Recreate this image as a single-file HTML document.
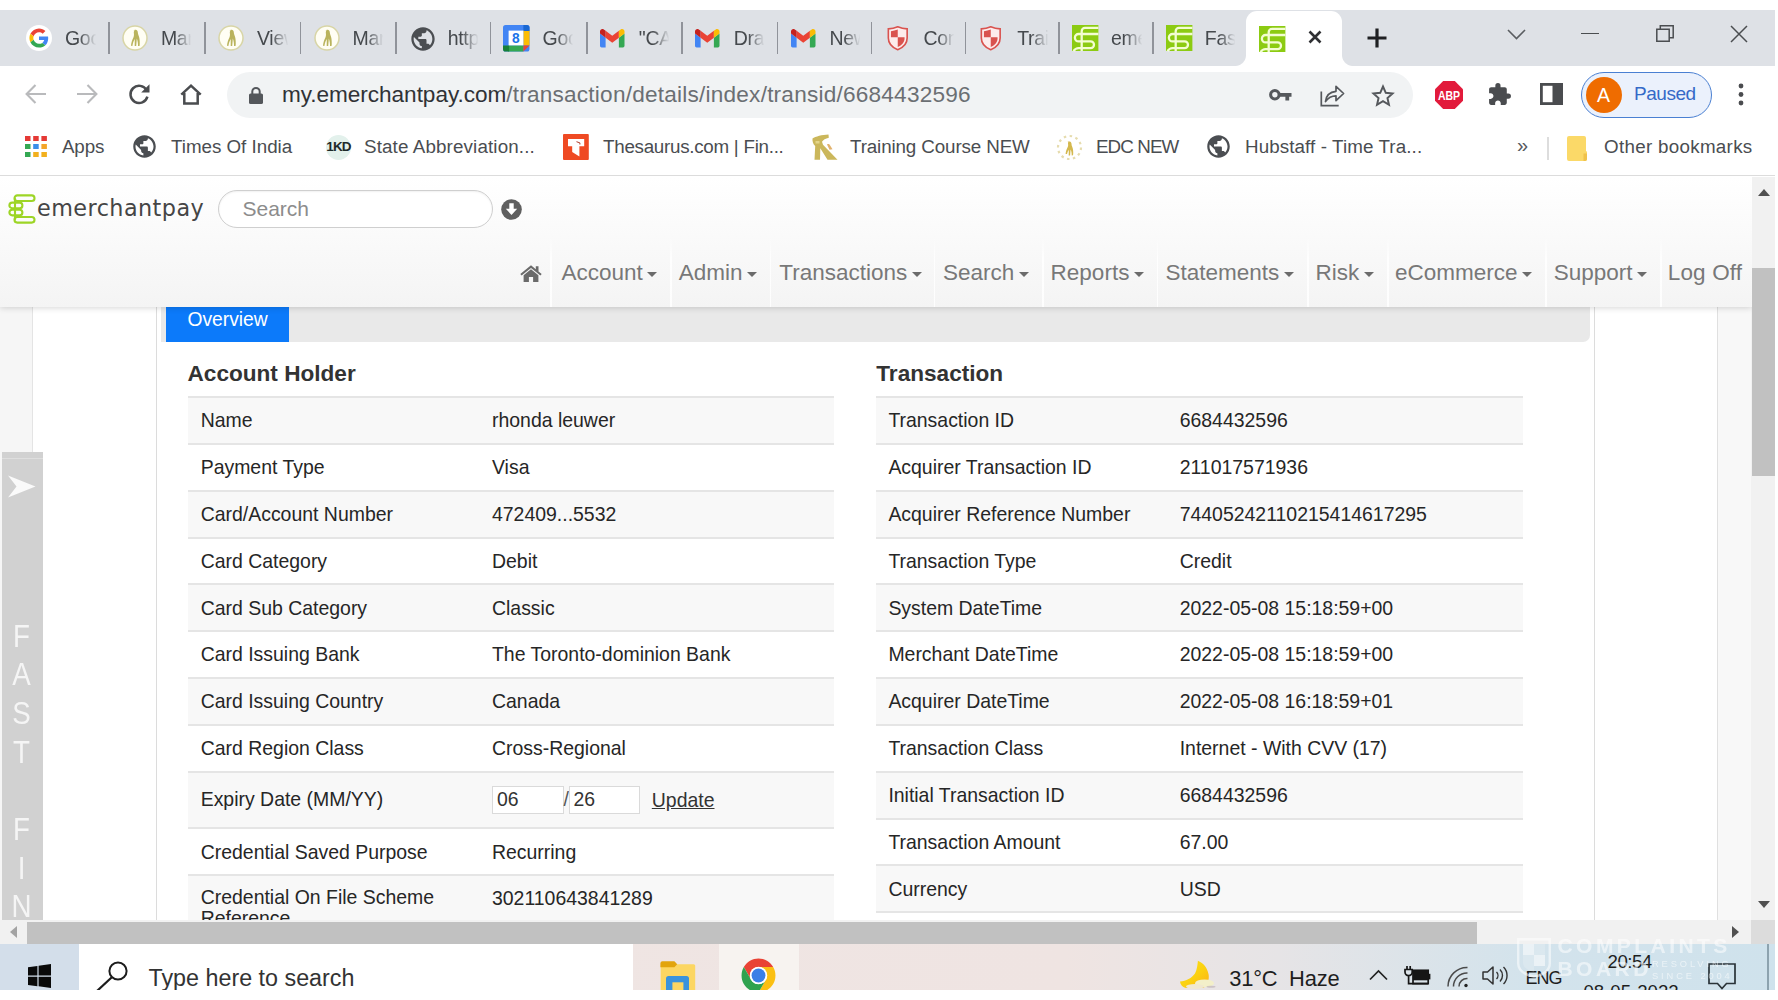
<!DOCTYPE html>
<html lang="en">
<head>
<meta charset="utf-8">
<title>emerchantpay - Transaction details</title>
<style>
*{box-sizing:border-box;margin:0;padding:0}
html,body{width:1778px;height:1000px;overflow:hidden;background:#fff}
body{position:relative;font-family:"Liberation Sans",sans-serif;color:#222}
.abs{position:absolute}
svg{display:block;overflow:visible}
/* ---------- chrome tab strip ---------- */
#tabstrip{position:absolute;left:0;top:10px;width:1775px;height:56px;background:#dee1e6}
.tab{position:absolute;top:0;height:56px;width:96px}
.tab .sep{position:absolute;left:-0.7px;top:12px;width:1.5px;height:32px;background:#90939a}
.ico{position:absolute;left:13px;top:15px;width:26px;height:26px}
.tab .tt{position:absolute;left:52px;top:15px;width:31.5px;height:28px;overflow:hidden;white-space:nowrap;font-size:19.5px;line-height:26px;color:#45494d;letter-spacing:-0.3px;-webkit-mask-image:linear-gradient(90deg,#000 45%,transparent 98%);mask-image:linear-gradient(90deg,#000 45%,transparent 98%)}
#acttab{position:absolute;left:1246px;top:1px;width:96px;height:55px;background:#fff;border-radius:11px 11px 0 0}
#acttab:before,#acttab:after{content:"";position:absolute;bottom:0;width:11px;height:11px}
#acttab:before{left:-11px;background:radial-gradient(circle at 0 0,transparent 10.5px,#fff 11.5px)}
#acttab:after{right:-11px;background:radial-gradient(circle at 100% 0,transparent 10.5px,#fff 11.5px)}
/* ---------- toolbar ---------- */
#toolbar{position:absolute;left:0;top:66px;width:1775px;height:56px;background:#fff}
#omni{position:absolute;left:227px;top:6px;width:1186px;height:46px;border-radius:23px;background:#f1f3f4}
#url{position:absolute;left:55px;top:8px;font-size:22.6px;line-height:30px;white-space:nowrap;color:#6b6f73;letter-spacing:-0.1px}
#url b{font-weight:normal;color:#303236;letter-spacing:-0.05px}
#upath{letter-spacing:0.22px}
/* ---------- bookmarks ---------- */
#bm{position:absolute;left:0;top:122px;width:1775px;height:54px;background:#fff;border-bottom:1.5px solid #dcdcdc}
.bk{position:absolute;top:11.3px;font-size:18.8px;line-height:28px;color:#4a4d51;white-space:nowrap}
/* ---------- page ---------- */
#page{position:absolute;left:0;top:177px;width:1752px;height:743px;background:#fff;overflow:hidden}
#hdr{position:absolute;left:0;top:0;width:1752px;height:130px;background:linear-gradient(#ffffff,#f4f4f4);box-shadow:0 1px 6px rgba(0,0,0,.16);z-index:5}
.nav{position:absolute;top:82.4px;font-size:22.5px;line-height:28px;color:#787878;white-space:nowrap}
.nav i{display:inline-block;width:0;height:0;border:5.5px solid transparent;border-top:5.8px solid #6b6b6b;border-bottom:0;margin-left:4.5px;vertical-align:3.5px}
.row{position:absolute;left:0;width:100%;border-top:2px solid #e5e5e5;font-size:19.44px;line-height:22px;color:#262626}
.row.o{background:#f8f8f8}
.row span{position:absolute;top:11.3px;white-space:nowrap}
.row .l{left:12.9px}
.row .v{left:304.2px}
.tbl.r .l{left:12.2px}
.tbl.r .v{left:303.5px}
.row .upd{text-decoration:underline;color:#333}
.inp{position:absolute;top:12.9px;width:71.5px;height:28.4px;border:1.5px solid #dadada;background:#fff;padding:0 0 0 3.6px;line-height:24.6px;font-size:19.44px;color:#333}
.tbl{position:absolute}
h2{position:absolute;font-size:22.6px;line-height:28px;font-weight:bold;color:#333;white-space:nowrap}
/* ---------- taskbar ---------- */
#task{position:absolute;left:0;top:944px;width:1775px;height:46px;background:linear-gradient(90deg,#efe6e4 0,#efe4e2 60%,#e6e4e6 72%,#d3e3ec 86%,#cfe2ec 100%);overflow:hidden}
</style>
</head>
<body>
<div id="tabstrip">
<div class="tab" style="left:13px"><div class="ico"><svg viewBox="0 0 52 52" width="26" height="26"><circle cx="26" cy="26" r="26" fill="#fff"/><g transform="translate(6.800 6.800) scale(.8)"><path fill="#EA4335" d="M24 9.5c3.54 0 6.71 1.22 9.21 3.6l6.85-6.85C35.9 2.38 30.47 0 24 0 14.62 0 6.51 5.38 2.56 13.22l7.98 6.19C12.43 13.72 17.74 9.5 24 9.5z"/><path fill="#4285F4" d="M46.98 24.55c0-1.57-.15-3.09-.38-4.55H24v9.02h12.94c-.58 2.96-2.26 5.48-4.78 7.18l7.73 6c4.51-4.18 7.09-10.36 7.09-17.65z"/><path fill="#FBBC05" d="M10.53 28.59c-.48-1.45-.76-2.99-.76-4.59s.27-3.14.76-4.59l-7.98-6.19C.92 16.46 0 20.12 0 24c0 3.88.92 7.54 2.56 10.78l7.97-6.19z"/><path fill="#34A853" d="M24 48c6.48 0 11.93-2.13 15.89-5.81l-7.73-6c-2.15 1.45-4.92 2.3-8.16 2.3-6.26 0-11.57-4.22-13.47-9.91l-7.98 6.19C6.51 42.62 14.62 48 24 48z"/></g></svg></div><div class="tt">Goo</div></div>
<div class="tab" style="left:108.9px"><div class="sep"></div><div class="ico"><svg viewBox="0 0 26 26" width="26" height="26"><circle cx="13" cy="13" r="12" fill="#fffef4" stroke="#d8d5a6" stroke-width="1.500"/><path d="M11.2 5.2c1.6-.9 3.6-.6 4.3.9.5 1.2.2 2.3.9 3.9.8 1.8 1.3 4.2 1.3 6.6 0 1.700.2 3.300-.2 4.300l-1.500.1c.1-2.600-.3-5.400-1.200-7.600-.3 2.400-.2 5-.6 7.500l-1.500.1c.2-2.300-.1-4.700.1-7-.9 1.800-1.800 3.300-2.100 5.300-.1.800-.1 1.300-.4 1.700l-1.300-.2c.2-2.800 1-5.400 2.200-7.800.7-1.500.9-2.900.7-4.500-.2-1.300-.1-2.600.8-3.300z" fill="#b9b35c"/></svg></div><div class="tt">Mar</div></div>
<div class="tab" style="left:205px"><div class="sep"></div><div class="ico"><svg viewBox="0 0 26 26" width="26" height="26"><circle cx="13" cy="13" r="12" fill="#fffef4" stroke="#d8d5a6" stroke-width="1.500"/><path d="M11.2 5.2c1.6-.9 3.6-.6 4.3.9.5 1.2.2 2.3.9 3.9.8 1.8 1.3 4.2 1.3 6.6 0 1.700.2 3.300-.2 4.300l-1.500.1c.1-2.600-.3-5.400-1.200-7.600-.3 2.400-.2 5-.6 7.500l-1.500.1c.2-2.300-.1-4.700.1-7-.9 1.800-1.800 3.300-2.100 5.300-.1.800-.1 1.300-.4 1.700l-1.300-.2c.2-2.800 1-5.400 2.200-7.800.7-1.500.9-2.900.7-4.500-.2-1.300-.1-2.600.8-3.300z" fill="#b9b35c"/></svg></div><div class="tt">View</div></div>
<div class="tab" style="left:300.5px"><div class="sep"></div><div class="ico"><svg viewBox="0 0 26 26" width="26" height="26"><circle cx="13" cy="13" r="12" fill="#fffef4" stroke="#d8d5a6" stroke-width="1.500"/><path d="M11.2 5.2c1.6-.9 3.6-.6 4.3.9.5 1.2.2 2.3.9 3.9.8 1.8 1.3 4.2 1.3 6.6 0 1.700.2 3.300-.2 4.300l-1.500.1c.1-2.600-.3-5.400-1.200-7.600-.3 2.400-.2 5-.6 7.500l-1.500.1c.2-2.300-.1-4.700.1-7-.9 1.800-1.800 3.300-2.100 5.300-.1.800-.1 1.300-.4 1.700l-1.300-.2c.2-2.800 1-5.400 2.200-7.800.7-1.500.9-2.900.7-4.500-.2-1.300-.1-2.600.8-3.300z" fill="#b9b35c"/></svg></div><div class="tt">Mar</div></div>
<div class="tab" style="left:395.7px"><div class="sep"></div><div class="ico"><svg viewBox="0 0 24 24" width="28" height="28"><path fill="#4b4e52" d="M12 2C6.480 2 2 6.480 2 12s4.480 10 10 10 10-4.480 10-10S17.520 2 12 2zm-1 17.930c-3.950-.49-7-3.850-7-7.930 0-.62.080-1.210.21-1.790L9 15v1c0 1.100.9 2 2 2v1.930zm6.900-2.540c-.26-.81-1-1.390-1.900-1.390h-1v-3c0-.55-.45-1-1-1H8v-2h2c.55 0 1-.45 1-1V7h2c1.100 0 2-.9 2-2v-.41c2.930 1.190 5 4.060 5 7.410 0 2.080-.8 3.970-2.100 5.390z"/></svg></div><div class="tt">http</div></div>
<div class="tab" style="left:490.6px"><div class="sep"></div><div class="ico"><svg viewBox="0 0 26 26" width="26.500" height="26.500" style="margin-left:-1px"><rect x="0" y="0" width="26" height="26" rx="2.500" fill="#4285f4"/><rect x="20" y="5" width="6" height="15" fill="#fbbc04"/><rect x="5" y="20" width="15" height="6" fill="#34a853"/><path d="M0 20h6v6H2.500A2.500 2.500 0 0 1 0 23.500z" fill="#188038"/><path d="M20 0h3.500A2.500 2.500 0 0 1 26 2.500V6h-6z" fill="#1967d2"/><path d="M20 20h6l-6 6z" fill="#ea4335"/><rect x="5.500" y="5.500" width="14.500" height="14.500" fill="#fff"/><text x="12.700" y="17.800" font-family="Liberation Sans,sans-serif" font-size="13.500" font-weight="bold" fill="#1a73e8" text-anchor="middle">8</text></svg></div><div class="tt">Goo</div></div>
<div class="tab" style="left:586.8px"><div class="sep"></div><div class="ico"><svg viewBox="0 0 24 18" width="24.500" height="18.500" style="margin-top:3.500px"><path fill="#4285f4" d="M0 4.400 5.500 8.500V18H1.600A1.600 1.600 0 0 1 0 16.400z"/><path fill="#34a853" d="M24 4.400 18.500 8.500V18h3.900a1.600 1.600 0 0 0 1.600-1.600z"/><path fill="#ea4335" d="M5.500 8.500 12 13.400l6.500-4.900V1.700L12 6.600 5.500 1.700z"/><path fill="#c5221f" d="M0 4.400 5.500 8.500V1.700L3.700.400C2.200-.8 0 .3 0 2.200z"/><path fill="#fbbc04" d="M24 4.400 18.500 8.500V1.700L20.300.400C21.800-.8 24 .3 24 2.200z"/></svg></div><div class="tt">&quot;CA</div></div>
<div class="tab" style="left:681.8px"><div class="sep"></div><div class="ico"><svg viewBox="0 0 24 18" width="24.500" height="18.500" style="margin-top:3.500px"><path fill="#4285f4" d="M0 4.400 5.500 8.500V18H1.600A1.600 1.600 0 0 1 0 16.400z"/><path fill="#34a853" d="M24 4.400 18.500 8.500V18h3.900a1.600 1.600 0 0 0 1.600-1.600z"/><path fill="#ea4335" d="M5.500 8.500 12 13.400l6.500-4.900V1.700L12 6.600 5.500 1.700z"/><path fill="#c5221f" d="M0 4.400 5.500 8.500V1.700L3.700.400C2.200-.8 0 .3 0 2.200z"/><path fill="#fbbc04" d="M24 4.400 18.500 8.500V1.700L20.300.400C21.800-.8 24 .3 24 2.200z"/></svg></div><div class="tt">Dra</div></div>
<div class="tab" style="left:777.5px"><div class="sep"></div><div class="ico"><svg viewBox="0 0 24 18" width="24.500" height="18.500" style="margin-top:3.500px"><path fill="#4285f4" d="M0 4.400 5.500 8.500V18H1.600A1.600 1.600 0 0 1 0 16.400z"/><path fill="#34a853" d="M24 4.400 18.500 8.500V18h3.900a1.600 1.600 0 0 0 1.600-1.600z"/><path fill="#ea4335" d="M5.500 8.500 12 13.400l6.500-4.900V1.700L12 6.600 5.500 1.700z"/><path fill="#c5221f" d="M0 4.400 5.500 8.500V1.700L3.700.400C2.200-.8 0 .3 0 2.200z"/><path fill="#fbbc04" d="M24 4.400 18.500 8.500V1.700L20.300.400C21.800-.8 24 .3 24 2.200z"/></svg></div><div class="tt">New</div></div>
<div class="tab" style="left:871.5px"><div class="sep"></div><div class="ico"><svg viewBox="0 0 24 28" width="21.500" height="26.500" style="margin-left:2px"><path d="M12 1.200C8.500 2.700 5 3.400 1.500 3.500v10.300c0 6 4.200 10.600 10.500 13 6.300-2.400 10.500-7 10.500-13V3.500C19 3.400 15.500 2.700 12 1.200z" fill="#fdecec" stroke="#d9534f" stroke-width="1.800"/><path d="M12 4.300c-2.500 1-5 1.600-7.600 1.800V13H12z" fill="#d9534f"/><path d="M12 13h7.600c0 .5 0 .8 0 1.100 0 4.300-3 7.800-7.600 9.800z" fill="#d9534f"/></svg></div><div class="tt">Con</div></div>
<div class="tab" style="left:965.2px"><div class="sep"></div><div class="ico"><svg viewBox="0 0 24 28" width="21.500" height="26.500" style="margin-left:2px"><path d="M12 1.200C8.500 2.700 5 3.400 1.500 3.500v10.300c0 6 4.200 10.600 10.500 13 6.300-2.400 10.500-7 10.500-13V3.500C19 3.400 15.500 2.700 12 1.200z" fill="#fdecec" stroke="#d9534f" stroke-width="1.800"/><path d="M12 4.300c-2.500 1-5 1.600-7.600 1.800V13H12z" fill="#d9534f"/><path d="M12 13h7.600c0 .5 0 .8 0 1.100 0 4.300-3 7.800-7.600 9.800z" fill="#d9534f"/></svg></div><div class="tt">Trai</div></div>
<div class="tab" style="left:1059px"><div class="sep"></div><div class="ico"><svg viewBox="0 0 26.4 26" width="26.400" height="26"><rect width="26.400" height="26" fill="#8ccb12"/><g fill="none" stroke="#f3fdd2" stroke-width="2.300"><path d="M26.400 2.900H13a3.300 3.300 0 0 0-3.300 3.300V26"/><path d="M26.400 9H6.600a3.700 3.700 0 0 0 0 7.400H18.600a3.400 3.400 0 0 1 0 6.800H6.500c-2.200 0-3.800 1.200-5 3"/></g></svg></div><div class="tt">eme</div></div>
<div class="tab" style="left:1152.8px"><div class="sep"></div><div class="ico"><svg viewBox="0 0 26.4 26" width="26.400" height="26"><rect width="26.400" height="26" fill="#8ccb12"/><g fill="none" stroke="#f3fdd2" stroke-width="2.300"><path d="M26.400 2.900H13a3.300 3.300 0 0 0-3.300 3.300V26"/><path d="M26.400 9H6.600a3.700 3.700 0 0 0 0 7.400H18.600a3.400 3.400 0 0 1 0 6.800H6.500c-2.200 0-3.800 1.200-5 3"/></g></svg></div><div class="tt">Fast</div></div>
<div id="acttab"><div class="ico" style="left:13px"><svg viewBox="0 0 26.4 26" width="26.400" height="26"><rect width="26.400" height="26" fill="#8ccb12"/><g fill="none" stroke="#f3fdd2" stroke-width="2.300"><path d="M26.400 2.900H13a3.300 3.300 0 0 0-3.300 3.300V26"/><path d="M26.400 9H6.600a3.700 3.700 0 0 0 0 7.400H18.600a3.400 3.400 0 0 1 0 6.800H6.500c-2.200 0-3.800 1.200-5 3"/></g></svg></div><svg class="abs" style="left:62px;top:19px" width="14" height="14" viewBox="0 0 14 14"><path d="M1.500 1.500l11 11M12.500 1.500l-11 11" stroke="#2f3033" stroke-width="2.600" fill="none"/></svg></div>
<svg class="abs" style="left:1366px;top:17px" width="22" height="22" viewBox="0 0 22 22"><path d="M11 1.500v19M1.500 11h19" stroke="#1f2023" stroke-width="3.200" fill="none"/></svg>
<svg class="abs" style="left:1507px;top:19px" width="19" height="11" viewBox="0 0 19 11"><path d="M1 1l8.500 8.500L18 1" stroke="#5a5d61" stroke-width="1.600" fill="none"/></svg>
<div class="abs" style="left:1581px;top:22.500px;width:18px;height:1.600px;background:#4a4d50"></div>
<svg class="abs" style="left:1656px;top:15px" width="18" height="17" viewBox="0 0 18 17"><path d="M.8 4.300h12.400v12H.8zM4.300 4.300V.8h12.900v12h-3.800" stroke="#4a4d50" stroke-width="1.500" fill="none"/></svg>
<svg class="abs" style="left:1730px;top:15px" width="18" height="18" viewBox="0 0 18 18"><path d="M1 1l16 16M17 1L1 17" stroke="#4a4d50" stroke-width="1.500" fill="none"/></svg>
</div>
<div id="toolbar">
<svg class="abs" style="left:25px;top:18px" width="22" height="20" viewBox="0 0 22 20"><path d="M21 10H2M10.500 1L1.600 10l8.900 9" stroke="#b9babc" stroke-width="2.100" fill="none"/></svg>
<svg class="abs" style="left:76px;top:18px" width="22" height="20" viewBox="0 0 22 20"><path d="M1 10h19M11.500 1l8.900 9-8.900 9" stroke="#b9babc" stroke-width="2.100" fill="none"/></svg>
<svg class="abs" style="left:128px;top:17px" width="23" height="22" viewBox="0 0 23 22"><path d="M18.600 7.200A8.600 8.600 0 1 0 19.400 13.600" stroke="#4a4c4f" stroke-width="2.500" fill="none"/><path d="M21.500 1.200v8.300h-8.300z" fill="#4a4c4f"/></svg>
<svg class="abs" style="left:180px;top:18px" width="22" height="21" viewBox="0 0 22 21"><path d="M1.300 10.700L11 1.700l9.700 9M4.300 9v10.500h13.400V9" stroke="#4a4c4f" stroke-width="2.500" fill="none" stroke-linejoin="miter"/></svg>
<div id="omni">
<svg class="abs" style="left:22px;top:15px" width="14" height="17" viewBox="0 0 14 17"><rect x="0" y="6.500" width="14" height="10.500" rx="1.600" fill="#54575b"/><path d="M3.300 7V4.600a3.700 3.700 0 0 1 7.400 0V7" stroke="#54575b" stroke-width="2" fill="none"/></svg>
<div id="url"><b>my.emerchantpay.com</b><span id="upath">/transaction/details/index/transid/6684432596</span></div>
<svg class="abs" style="left:1041.500px;top:15.500px" width="22.500" height="13.500" viewBox="0 0 25 15"><circle cx="6.500" cy="7.500" r="4.700" stroke="#55585c" stroke-width="3.400" fill="none"/><path d="M11 5.600h14v4h-2.600v4.400h-4.200V9.600H11z" fill="#55585c"/></svg>
<svg class="abs" style="left:1093px;top:11px" width="25" height="24" viewBox="0 0 25 24"><path d="M1.300 8.500V22.700h17.400" stroke="#55585c" stroke-width="1.700" fill="none"/><path d="M5.500 18.500c.6-6 4.600-9.600 10.500-10.200V3.300l7.600 7.200-7.600 7.200v-4.900c-4.300 0-7.600 1.500-10.500 5.700z" stroke="#55585c" stroke-width="1.700" fill="none" stroke-linejoin="round"/></svg>
<svg class="abs" style="left:1145px;top:12.500px" width="22" height="21" viewBox="0 0 26 25"><path d="M13 1.800l3.300 7.500 8.100.8-6.100 5.400 1.800 8L13 19.300l-7.100 4.200 1.800-8L1.600 10.100l8.100-.8z" stroke="#55585c" stroke-width="2.300" fill="none" stroke-linejoin="miter"/></svg>
</div>
<svg class="abs" style="left:1434.500px;top:14.500px" width="28" height="28" viewBox="0 0 29 29"><path d="M8.500 0h12L29 8.500v12L20.500 29h-12L0 20.500v-12z" fill="#e21a3b"/><text x="14.500" y="19.600" font-family="Liberation Sans,sans-serif" font-size="13.500" font-weight="bold" fill="#fff" text-anchor="middle" textLength="23" lengthAdjust="spacingAndGlyphs">ABP</text></svg>
<svg class="abs" style="left:1487px;top:16px" width="25" height="25" viewBox="0 0 24 24"><path fill="#4a4c4f" d="M20.500 11H19V7c0-1.100-.9-2-2-2h-4V3.500a2.500 2.500 0 0 0-5 0V5H4c-1.100 0-1.990.9-1.990 2v3.800H3.500c1.490 0 2.700 1.210 2.700 2.700s-1.210 2.700-2.700 2.700H2V20c0 1.100.9 2 2 2h3.800v-1.500c0-1.490 1.210-2.700 2.700-2.700 1.490 0 2.700 1.210 2.700 2.700V22H17c1.100 0 2-.9 2-2v-4h1.500a2.500 2.500 0 0 0 0-5z"/></svg>
<svg class="abs" style="left:1540px;top:17px" width="23" height="22" viewBox="0 0 23 22"><rect x="1.400" y="1.400" width="20.200" height="19.200" stroke="#4a4c4f" stroke-width="2.800" fill="none"/><rect x="12.500" y="1" width="9.500" height="20" fill="#4a4c4f"/></svg>
<div class="abs" style="left:1581px;top:6px;width:131px;height:46px;border-radius:23px;border:1.600px solid #4a80d2;background:#ebf1fc"></div>
<div class="abs" style="left:1585.500px;top:11px;width:36px;height:36px;border-radius:18px;background:#ef6c00;color:#fff;font-size:19.500px;line-height:36px;text-align:center">A</div>
<div class="abs" style="left:1634px;top:14px;font-size:19px;line-height:28px;color:#3569c8;letter-spacing:-0.450px">Paused</div>
<svg class="abs" style="left:1737px;top:17px" width="8" height="24" viewBox="0 0 8 24"><circle cx="4" cy="3" r="2.400" fill="#4a4c4f"/><circle cx="4" cy="11.500" r="2.400" fill="#4a4c4f"/><circle cx="4" cy="20" r="2.400" fill="#4a4c4f"/></svg>
</div>

<div id="bm">
<svg class="abs" style="left:25px;top:13.500px" width="22" height="21" viewBox="0 0 22 21"><g fill="#e53935"><rect x="0" y="0" width="5.500" height="5"/><rect x="8.200" y="0" width="5.500" height="5"/><rect x="16.400" y="0" width="5.500" height="5"/></g><rect x="0" y="8" width="5.500" height="5" fill="#34a853"/><rect x="8.200" y="8" width="5.500" height="5" fill="#3b8ee8"/><rect x="16.400" y="8" width="5.500" height="5" fill="#f4a52a"/><rect x="0" y="16" width="5.500" height="5" fill="#34a853"/><rect x="8.200" y="16" width="5.500" height="5" fill="#f2b01e"/><rect x="16.400" y="16" width="5.500" height="5" fill="#f2b01e"/></svg>
<div class="bk" id="b1" style="letter-spacing:-0.17px;left:62px">Apps</div>
<div class="abs" style="left:130.500px;top:11.300px"><svg viewBox="0 0 24 24" width="27" height="27"><path fill="#4b4e52" d="M12 2C6.480 2 2 6.480 2 12s4.480 10 10 10 10-4.480 10-10S17.520 2 12 2zm-1 17.930c-3.950-.49-7-3.850-7-7.930 0-.62.080-1.210.21-1.790L9 15v1c0 1.100.9 2 2 2v1.930zm6.900-2.540c-.26-.81-1-1.390-1.900-1.390h-1v-3c0-.55-.45-1-1-1H8v-2h2c.55 0 1-.45 1-1V7h2c1.100 0 2-.9 2-2v-.41c2.930 1.190 5 4.060 5 7.410 0 2.080-.8 3.970-2.100 5.390z"/></svg></div>
<div class="bk" id="b2" style="letter-spacing:-0.02px;left:171px">Times Of India</div>
<div class="abs" style="left:326px;top:12.500px;width:25px;height:25px;border-radius:50%;background:#e3f1ec"></div>
<div class="abs" id="kd" style="left:326px;top:15px;width:25px;text-align:center;font-size:13.500px;line-height:20px;font-weight:bold;color:#1e2a2a;letter-spacing:-0.800px">1KD</div>
<div class="bk" id="b3" style="letter-spacing:0.13px;left:364px">State Abbreviation...</div>
<svg class="abs" style="left:563px;top:12px" width="25.800" height="26" viewBox="0 0 25.800 26"><rect width="25.800" height="26" rx="1" fill="#ef4a23"/><path d="M5 5h16.200v7.200h-4.800v10.300L9.200 18v-5.800H5z" fill="#fff"/><path d="M13.500 7.700l3.400 1.200v1.600" stroke="#b23a2a" stroke-width="1" fill="none"/></svg>
<div class="bk" id="b4" style="letter-spacing:-0.27px;left:603px">Thesaurus.com | Fin...</div>
<svg class="abs" style="left:810.500px;top:12px" width="27" height="26" viewBox="0 0 27 26"><path d="M1.500 4.500C4.500 2.300 11 .6 17.500.4l.3 3.300c-3.300.8-5.600 2-6.800 4l1 3 14.500 15H16.500L9.300 14.200 9 25.700H3.500L4.200 12C2 10 1.200 7.300 1.500 4.500z" fill="#cbb75b"/><path d="M16 10.500c1-.8 2.500-.5 3 .8l2.500 4-3 .5z" fill="#e2b26d"/><rect x="4.500" y="7" width="4" height="2.500" fill="#e3d58a"/></svg>
<div class="bk" id="b5" style="letter-spacing:-0.12px;left:850px">Training Course NEW</div>
<svg class="abs" style="left:1056px;top:12px" width="27" height="27" viewBox="0 0 27 27"><circle cx="13.500" cy="13.500" r="11.500" fill="none" stroke="#e6dcae" stroke-width="2.200" stroke-dasharray="2.500 3.500"/><path d="M11.500 8c1.500-.8 3.300-.3 3.800 1 .4 1.100.1 2 .8 3.400.7 1.500 1.100 3.500 1.100 5.600 0 1.300.1 2.500-.2 3.300l-1.300.1c.1-2.100-.3-4.300-1.100-6-.3 1.900-.2 4-.5 6l-1.400.1c.2-1.900-.1-3.800.1-5.700-.8 1.500-1.500 2.700-1.800 4.300l-1.400-.1c.2-2.300.9-4.400 1.900-6.400.6-1.200.8-2.400.6-3.700-.2-1-.1-1.400.4-1.900z" fill="#d4b84e"/></svg>
<div class="bk" id="b6" style="letter-spacing:-0.91px;left:1096px">EDC NEW</div>
<div class="abs" style="left:1205.300px;top:11.300px"><svg viewBox="0 0 24 24" width="27" height="27"><path fill="#4b4e52" d="M12 2C6.480 2 2 6.480 2 12s4.480 10 10 10 10-4.480 10-10S17.520 2 12 2zm-1 17.930c-3.950-.49-7-3.850-7-7.930 0-.62.080-1.210.21-1.790L9 15v1c0 1.100.9 2 2 2v1.930zm6.900-2.540c-.26-.81-1-1.390-1.900-1.390h-1v-3c0-.55-.45-1-1-1H8v-2h2c.55 0 1-.45 1-1V7h2c1.100 0 2-.9 2-2v-.41c2.930 1.190 5 4.060 5 7.410 0 2.080-.8 3.970-2.100 5.390z"/></svg></div>
<div class="bk" id="b7" style="letter-spacing:0.10px;left:1245px">Hubstaff - Time Tra...</div>
<div class="bk" id="b8" style="left:1517px;font-size:20px;top:9px;color:#55585c">»</div>
<div class="abs" style="left:1547px;top:15px;width:1.500px;height:23px;background:#dddddd"></div>
<svg class="abs" style="left:1567px;top:14px" width="20" height="25" viewBox="0 0 20 25"><path d="M0 2a2 2 0 0 1 2-2h15a2 2 0 0 1 2 2v13l1 .8V23a2 2 0 0 1-2 2H2a2 2 0 0 1-2-2z" fill="#fbd968"/><path d="M16.500 17.500h3.500V23a2 2 0 0 1-2 2h-1.500z" fill="#f0c24a"/></svg>
<div class="bk" id="b9" style="letter-spacing:0.30px;left:1604px">Other bookmarks</div>
</div>

<div id="page">
<div class="abs" style="left:0;top:0;width:33px;height:743px;background:#f6f6f6;border-right:1px solid #e4e4e4"></div>
<div class="abs" style="left:155.500px;top:0;width:1.600px;height:743px;background:#dcdcdc"></div>
<div class="abs" style="left:1593.500px;top:0;width:1.600px;height:743px;background:#dcdcdc"></div>
<div class="abs" style="left:1717px;top:0;width:35px;height:743px;background:#f8f8f8;border-left:1.500px solid #e0e0e0"></div>
<div class="abs" style="left:161px;top:129px;width:1428.500px;height:35.500px;background:#e9e9e9;border-radius:0 0 7px 0"></div>
<div class="abs" id="ovtab" style="left:166px;top:129px;width:123px;height:35.500px;background:#0c7afa"></div>
<div class="abs" id="ov" style="left:187.400px;top:132px;font-size:19.300px;line-height:22px;color:#fff;white-space:nowrap">Overview</div>
<h2 id="h1" style="left:187.500px;top:182.8px">Account Holder</h2>
<h2 id="h2" style="left:876.300px;top:182.8px">Transaction</h2>
<div class="tbl l" style="left:187.8px;top:0;width:646.600px;height:743px"><div class="row o" style="top:219.05px;height:47.13px"><span class="l">Name</span><span class="v">rhonda leuwer</span></div>
<div class="row" style="top:265.88px;height:46.83px"><span class="l">Payment Type</span><span class="v">Visa</span></div>
<div class="row o" style="top:312.71px;height:47.13px"><span class="l">Card/Account Number</span><span class="v">472409...5532</span></div>
<div class="row" style="top:359.54px;height:46.83px"><span class="l">Card Category</span><span class="v">Debit</span></div>
<div class="row o" style="top:406.37px;height:47.13px"><span class="l">Card Sub Category</span><span class="v">Classic</span></div>
<div class="row" style="top:453.20px;height:46.83px"><span class="l">Card Issuing Bank</span><span class="v">The Toronto-dominion Bank</span></div>
<div class="row o" style="top:500.03px;height:47.13px"><span class="l">Card Issuing Country</span><span class="v">Canada</span></div>
<div class="row" style="top:546.86px;height:46.83px"><span class="l">Card Region Class</span><span class="v">Cross-Regional</span></div>
<div class="row o" style="top:593.69px;height:56.90px"><span class="l" style="top:15.700px">Expiry Date (MM/YY)</span><div class="inp" style="left:304.600px">06</div><span style="left:375.800px;top:15.700px;color:#555">/</span><div class="inp" style="left:381.100px">26</div><span class="v upd" style="left:464px;top:15.900px">Update</span></div>
<div class="row" style="top:650.29px;height:46.83px"><span class="l">Credential Saved Purpose</span><span class="v">Recurring</span></div>
<div class="row o" style="top:697.12px;height:47.30px"><span class="l" style="white-space:normal;line-height:20.600px;top:10.900px">Credential On File Scheme<br>Reference</span><span class="v">302110643841289</span></div></div>
<div class="tbl r" style="left:876.2px;top:0;width:646.600px;height:743px"><div class="row o" style="top:219.05px;height:47.13px"><span class="l">Transaction ID</span><span class="v">6684432596</span></div>
<div class="row" style="top:265.88px;height:46.83px"><span class="l">Acquirer Transaction ID</span><span class="v">211017571936</span></div>
<div class="row o" style="top:312.71px;height:47.13px"><span class="l">Acquirer Reference Number</span><span class="v">74405242110215414617295</span></div>
<div class="row" style="top:359.54px;height:46.83px"><span class="l">Transaction Type</span><span class="v">Credit</span></div>
<div class="row o" style="top:406.37px;height:47.13px"><span class="l">System DateTime</span><span class="v">2022-05-08 15:18:59+00</span></div>
<div class="row" style="top:453.20px;height:46.83px"><span class="l">Merchant DateTime</span><span class="v">2022-05-08 15:18:59+00</span></div>
<div class="row o" style="top:500.03px;height:47.13px"><span class="l">Acquirer DateTime</span><span class="v">2022-05-08 16:18:59+01</span></div>
<div class="row" style="top:546.86px;height:46.83px"><span class="l">Transaction Class</span><span class="v">Internet - With CVV (17)</span></div>
<div class="row o" style="top:593.69px;height:47.13px"><span class="l">Initial Transaction ID</span><span class="v">6684432596</span></div>
<div class="row" style="top:640.52px;height:46.83px"><span class="l">Transaction Amount</span><span class="v">67.00</span></div>
<div class="row o" style="top:687.35px;height:47.13px"><span class="l">Currency</span><span class="v">USD</span></div>
<div class="row" style="top:734.18px;height:2px"></div></div>
<div class="abs" style="left:2px;top:275px;width:41px;height:470px;background:#d1d1d1"></div>
<div class="abs" style="left:2px;top:280.500px;width:41px;height:1.800px;background:#dedede"></div>
<svg class="abs" style="left:7px;top:298px" width="29" height="23" viewBox="0 0 29 23"><path d="M1 0.500L28.500 11.500 1 22.500l8.500-11z" fill="#fafafa"/></svg>
<div class="abs" id="fast" style="left:2px;top:439.500px;width:39px;text-align:center;font-size:31.500px;line-height:38.700px;color:#f5f5f5;transform:scaleX(.88)">F<br>A<br>S<br>T<br>&nbsp;<br>F<br>I<br>N</div>
<div id="hdr">
<svg class="abs" style="left:7.500px;top:17px" width="28" height="30" viewBox="0 0 28 30"><g fill="none" stroke="#9dd526" stroke-width="2.100"><rect x="6.500" y="1.400" width="20" height="5.600" rx="2.800"/><rect x="1.400" y="8.600" width="13" height="5.600" rx="2.800"/><rect x="1.400" y="15.800" width="13" height="5.600" rx="2.800"/><rect x="6.500" y="23" width="20" height="5.600" rx="2.800"/><path d="M7 4.200v21.600"/></g></svg>
<div class="abs" id="logo" style="left:37px;top:15.500px;font-family:DejaVu Sans,Liberation Sans,sans-serif;font-size:22.300px;line-height:30px;color:#454545;letter-spacing:0.450px;white-space:nowrap">emerchantpay</div>
<div class="abs" style="left:218px;top:12.500px;width:275px;height:38.500px;border:1.500px solid #cfcfcf;border-radius:20px;background:#fff;box-shadow:inset 0 1px 2px rgba(0,0,0,.06)"></div>
<div class="abs" id="sq" style="left:242.500px;top:18.500px;font-size:21px;line-height:26px;color:#8c8c8c;white-space:nowrap">Search</div>
<svg class="abs" style="left:500.500px;top:21.500px" width="21" height="21" viewBox="0 0 21 21"><circle cx="10.500" cy="10.500" r="10.300" fill="#5f5f5f"/><path d="M8.300 4.300h4.400v5.400h3.500L10.500 16 4.800 9.700h3.500z" fill="#fff"/></svg>
<svg class="abs" style="left:520px;top:88px" width="22" height="17" viewBox="0 0 22 17"><path d="M11 0.300L0.300 9l1.300 1.500L11 2.900l9.400 7.600L21.700 9l-3.200-2.600V1.200h-2.700v3z" fill="#6a6a6a"/><path d="M11 4.300L3.600 10.300V17h5.300v-5h4.200v5h5.300v-6.700z" fill="#6a6a6a"/></svg>
<div class="nav" id="n0" style="left:561.4px">Account<i></i></div>
<div class="nav" id="n1" style="left:678.7px">Admin<i></i></div>
<div class="nav" id="n2" style="left:779.3px">Transactions<i></i></div>
<div class="nav" id="n3" style="left:943.0px">Search<i></i></div>
<div class="nav" id="n4" style="left:1050.6px">Reports<i></i></div>
<div class="nav" id="n5" style="left:1165.4px">Statements<i></i></div>
<div class="nav" id="n6" style="left:1315.6px">Risk<i></i></div>
<div class="nav" id="n7" style="left:1395.0px">eCommerce<i></i></div>
<div class="nav" id="n8" style="left:1553.7px">Support<i></i></div>
<div class="nav" id="n9" style="left:1667.8px;letter-spacing:0.15px">Log Off</div>
<div class="abs" style="left:550.3px;top:60px;width:1.500px;height:70px;background:linear-gradient(rgba(255,255,255,0),rgba(255,255,255,.85) 30%)"></div>
<div class="abs" style="left:670.0px;top:60px;width:1.500px;height:70px;background:linear-gradient(rgba(255,255,255,0),rgba(255,255,255,.85) 30%)"></div>
<div class="abs" style="left:769.5px;top:60px;width:1.500px;height:70px;background:linear-gradient(rgba(255,255,255,0),rgba(255,255,255,.85) 30%)"></div>
<div class="abs" style="left:933.5px;top:60px;width:1.500px;height:70px;background:linear-gradient(rgba(255,255,255,0),rgba(255,255,255,.85) 30%)"></div>
<div class="abs" style="left:1042.0px;top:60px;width:1.500px;height:70px;background:linear-gradient(rgba(255,255,255,0),rgba(255,255,255,.85) 30%)"></div>
<div class="abs" style="left:1156.5px;top:60px;width:1.500px;height:70px;background:linear-gradient(rgba(255,255,255,0),rgba(255,255,255,.85) 30%)"></div>
<div class="abs" style="left:1307.0px;top:60px;width:1.500px;height:70px;background:linear-gradient(rgba(255,255,255,0),rgba(255,255,255,.85) 30%)"></div>
<div class="abs" style="left:1387.0px;top:60px;width:1.500px;height:70px;background:linear-gradient(rgba(255,255,255,0),rgba(255,255,255,.85) 30%)"></div>
<div class="abs" style="left:1545.0px;top:60px;width:1.500px;height:70px;background:linear-gradient(rgba(255,255,255,0),rgba(255,255,255,.85) 30%)"></div>
<div class="abs" style="left:1660.0px;top:60px;width:1.500px;height:70px;background:linear-gradient(rgba(255,255,255,0),rgba(255,255,255,.85) 30%)"></div>
</div>
</div>
<div id="vscroll" class="abs" style="left:1750.500px;top:177px;width:24.500px;height:743.500px;background:#f1f1f1">
<svg class="abs" style="left:7px;top:11.500px" width="12" height="7" viewBox="0 0 12 7"><path d="M0 7L6 0l6 7z" fill="#505050"/></svg>
<div class="abs" style="left:1.500px;top:90.500px;width:23px;height:208px;background:#c1c1c1"></div>
<svg class="abs" style="left:7px;top:724px" width="12" height="7" viewBox="0 0 12 7"><path d="M0 0h12L6 7z" fill="#505050"/></svg>
</div>
<div id="hscroll" class="abs" style="left:0;top:920px;width:1750.500px;height:24px;background:#f1f1f1">
<svg class="abs" style="left:9.500px;top:6px" width="7" height="12" viewBox="0 0 7 12"><path d="M7 0v12L0 6z" fill="#a3a3a3"/></svg>
<div class="abs" style="left:27px;top:1.500px;width:1450px;height:22px;background:#c1c1c1"></div>
<svg class="abs" style="left:1732px;top:6px" width="7" height="12" viewBox="0 0 7 12"><path d="M0 0v12l7-6z" fill="#505050"/></svg>
</div>
<div class="abs" style="left:1750.500px;top:920px;width:24.500px;height:24px;background:#dcdcdc"></div>

<div id="task">
<div class="abs" style="left:0;top:0;width:79px;height:46px;background:#d3deea"></div>
<svg class="abs" style="left:27.500px;top:20px" width="23" height="24" viewBox="0 0 23 24"><path d="M0 3.300L9.400 2v9.500H0zM10.600 1.800L23 0v11.500H10.600zM0 12.700h9.400v9.500L0 20.900zM10.600 12.700H23V24l-12.400-1.700z" fill="#0a0a0a"/></svg>
<div class="abs" style="left:79px;top:0;width:554px;height:46px;background:#fff"></div>
<svg class="abs" style="left:96px;top:17px" width="33" height="30" viewBox="0 0 33 30"><circle cx="22" cy="10" r="8.600" stroke="#1c1c1c" stroke-width="2" fill="none"/><path d="M15.800 16.200L1 30" stroke="#1c1c1c" stroke-width="2.200"/></svg>
<div class="abs" id="tsearch" style="left:148.500px;top:19.400px;font-size:23.300px;line-height:30px;color:#333;white-space:nowrap">Type here to search</div>
<div class="abs" style="left:719px;top:0;width:79.500px;height:46px;background:#f7f3f0"></div>
<svg class="abs" style="left:660px;top:17px" width="36" height="30" viewBox="0 0 36 30"><rect x="0.700" y="3.300" width="34.500" height="28" rx="1.500" fill="#fcd662"/><path d="M0.400 2.300a2 2 0 0 1 2-2h12l2.800 3-2.800 3H0.400z" fill="#e2a40c"/><rect x="6" y="15" width="23" height="16" rx="2.500" fill="#3a93dc"/><rect x="12.400" y="21.300" width="11" height="10" fill="#fcd662"/></svg>
<svg class="abs" style="left:739.500px;top:13.200px" width="37" height="37" viewBox="0 0 48 48"><path d="M4.950 13A22 22 0 0 1 43.050 13L24 13A11 11 0 0 0 14.470 29.500Z" fill="#e94335"/><path d="M43.050 13A22 22 0 0 1 24 46L33.530 29.500A11 11 0 0 0 24 13Z" fill="#fbbf12"/><path d="M24 46A22 22 0 0 1 4.950 13L14.470 29.500A11 11 0 0 0 33.530 29.500Z" fill="#2fa24f"/><circle cx="24" cy="24" r="11.300" fill="#fff"/><circle cx="24" cy="24" r="9" fill="#3b7fe6"/></svg>
<svg class="abs" style="left:1178px;top:16px" width="40" height="30" viewBox="0 0 40 30"><defs><linearGradient id="mg" x1="0" y1="0" x2="1" y2="1"><stop offset="0" stop-color="#f7e21a"/><stop offset=".55" stop-color="#fbd010"/><stop offset="1" stop-color="#fdb016"/></linearGradient></defs><path d="M19.900 0.800C25 3 29 7 30.500 14c1 5-.5 10-4.500 13.500L8 28c-4-1-5.500-3.500-6-6.500 6-.5 12-3.500 15-8 2-3.500 2.500-8.500 2.900-12.700z" fill="url(#mg)"/><ellipse cx="26.500" cy="23.300" rx="9.500" ry="3.900" fill="#f3efc9"/><ellipse cx="17" cy="26.500" rx="9" ry="2.600" fill="#f0e8cf"/><ellipse cx="33" cy="26.800" rx="4.500" ry="1" fill="#b9aeb0" opacity=".6"/></svg>
<div class="abs" id="wx" style="left:1229.200px;top:20.700px;letter-spacing:-0.200px;font-size:21.900px;line-height:28px;color:#1e1e1e;white-space:pre">31°C  Haze</div>
<svg class="abs" style="left:1369px;top:26px" width="19" height="10" viewBox="0 0 19 10"><path d="M1 9.500L9.500 1 18 9.500" stroke="#222" stroke-width="1.700" fill="none"/></svg>
<svg class="abs" style="left:1404px;top:21.500px" width="28" height="19" viewBox="0 0 28 19"><path d="M3 0v3.500M6.200 0v3.500M1 3.500h7.200v2.500a3.600 3.600 0 0 1-7.200 0zM4.600 9.600v8H24.200" stroke="#161616" stroke-width="1.700" fill="none"/><rect x="9" y="4.300" width="15.200" height="13.300" stroke="#161616" stroke-width="1.700" fill="none"/><rect x="9" y="4.300" width="15.200" height="10" fill="#161616"/><rect x="24.600" y="7.800" width="1.800" height="5.600" fill="#161616"/></svg>
<svg class="abs" style="left:1446px;top:21px" width="24" height="24" viewBox="0 0 24 24"><g fill="none" stroke="#4a4a4a" stroke-width="1.500"><path d="M2 21.500A19 19 0 0 1 21.500 2.500"/><path d="M7.500 21.500A13.500 13.500 0 0 1 21.500 8"/><path d="M13 21.500A8 8 0 0 1 21.500 13.500"/></g><circle cx="20" cy="20.500" r="1.700" fill="#222"/></svg>
<svg class="abs" style="left:1482px;top:22px" width="27" height="19" viewBox="0 0 27 19"><path d="M1 6h4.500L11 1v17l-5.500-5H1z" stroke="#333" stroke-width="1.500" fill="none" stroke-linejoin="round"/><path d="M14.500 6a5 5 0 0 1 0 7M18 3.500a8.500 8.500 0 0 1 0 12M21.500 1a12 12 0 0 1 0 17" stroke="#333" stroke-width="1.400" fill="none"/></svg>
<div class="abs" id="eng" style="left:1525.500px;top:22px;font-size:18px;line-height:24px;color:#1e1e1e;white-space:nowrap;letter-spacing:-1px">ENG</div>
<div class="abs" id="clk" style="left:1607.500px;top:5.500px;font-size:18.700px;line-height:24px;color:#1e1e1e;white-space:nowrap;letter-spacing:-0.500px">20:54</div>
<div class="abs" id="dat" style="left:1583.500px;top:36px;font-size:18.600px;line-height:24px;color:#1e1e1e;white-space:nowrap">08-05-2022</div>
<svg class="abs" style="left:1708px;top:19px" width="28" height="28" viewBox="0 0 28 28"><path d="M1 1h26v19.500h-8.500L14 25.500 9.500 20.500H1z" stroke="#2a3338" stroke-width="1.700" fill="none"/></svg>
<div class="abs" style="left:1767px;top:0;width:1.500px;height:46px;background:#8da3af"></div>
</div>
<div id="wm" class="abs" style="left:1517px;top:937px;width:230px;height:46px;opacity:.55;color:#fff;white-space:nowrap;font-weight:bold">
<svg class="abs" style="left:0;top:1px" width="34" height="40" viewBox="0 0 34 40"><path d="M1.200 1.200h31.600v24c0 7-6.500 11.500-15.800 13.500C7.700 36.700 1.200 32.200 1.200 25.200z" stroke="#fff" stroke-width="2.400" fill="none"/><rect x="6" y="6" width="11" height="11" fill="#fff"/><rect x="17" y="17" width="11" height="11" fill="#fff"/><path d="M6 17h11v17c-6-1.500-11-4.500-11-9.500zM17 6h11v11H17z" fill="#fff" opacity=".35"/></svg>
<div class="abs" id="wm1" style="left:40.500px;top:-3px;font-size:21px;line-height:24px;letter-spacing:3.450px">COMPLAINTS</div>
<div class="abs" id="wm2" style="left:40.500px;top:20px;font-size:21px;line-height:24px;letter-spacing:3.450px">BOARD</div>
<div class="abs" id="wm3" style="left:135px;top:22px;font-size:9.300px;line-height:10px;letter-spacing:2.900px;font-weight:normal">RESOLVING</div>
<div class="abs" id="wm4" style="left:135px;top:33.500px;font-size:9.300px;line-height:10px;letter-spacing:2.900px;font-weight:normal">SINCE 2004</div>
</div>

</body>
</html>
